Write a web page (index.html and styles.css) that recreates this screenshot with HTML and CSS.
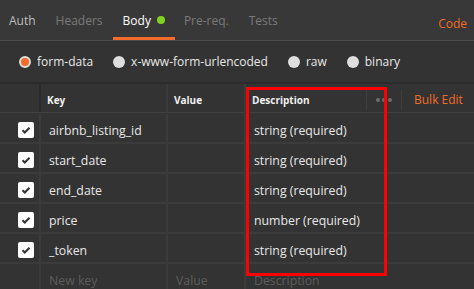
FILE: index.html
```html
<!DOCTYPE html>
<html lang="en">
  <head>
    <title>Body - form-data</title>
    <meta charset="utf-8" />
    <link rel="stylesheet" href="styles.css">
  </head>
  <body>
    <div class="tabs">
      <span class="tab">Auth</span>
      <span class="tab off">Headers</span>
      <span class="tab active">Body <i class="dot"></i></span>
      <span class="tab off prereq">Pre-req.</span>
      <span class="tab off">Tests</span>
      <span class="code">Code</span>
    </div>

    <div class="modes">
      <label class="mode"><span class="radio checked"></span>form-data</label>
      <label class="mode"><span class="radio"></span>x-www-form-urlencoded</label>
      <label class="mode"><span class="radio"></span>raw</label>
      <label class="mode"><span class="radio"></span>binary</label>
    </div>

    <div class="params">
      <div class="row head">
        <div class="cell check"></div>
        <div class="cell key">Key</div>
        <div class="cell value">Value</div>
        <div class="cell desc">Description</div>
        <div class="cell more">
          <span class="sep"></span>
          <svg width="16" height="4" viewBox="0 0 16 4"><circle cx="2" cy="2" r="2" fill="#6e6e6e"/><circle cx="8" cy="2" r="2" fill="#6e6e6e"/><circle cx="14" cy="2" r="2" fill="#6e6e6e"/></svg>
          <span class="sep"></span>
        </div>
        <div class="cell bulk">Bulk Edit</div>
      </div>
      <div class="row">
        <div class="cell check"><span class="box"><svg viewBox="0 0 16 16" width="16" height="16"><path d="M4.5 8.2l2.3 2.3 4.7-4.7" fill="none" stroke="#333" stroke-width="2"/></svg></span></div>
        <div class="cell key">airbnb_listing_id</div>
        <div class="cell value"></div>
        <div class="cell desc wide">string (required)</div>
      </div>
      <div class="row">
        <div class="cell check"><span class="box"><svg viewBox="0 0 16 16" width="16" height="16"><path d="M4.5 8.2l2.3 2.3 4.7-4.7" fill="none" stroke="#333" stroke-width="2"/></svg></span></div>
        <div class="cell key">start_date</div>
        <div class="cell value"></div>
        <div class="cell desc wide">string (required)</div>
      </div>
      <div class="row">
        <div class="cell check"><span class="box"><svg viewBox="0 0 16 16" width="16" height="16"><path d="M4.5 8.2l2.3 2.3 4.7-4.7" fill="none" stroke="#333" stroke-width="2"/></svg></span></div>
        <div class="cell key">end_date</div>
        <div class="cell value"></div>
        <div class="cell desc wide">string (required)</div>
      </div>
      <div class="row">
        <div class="cell check"><span class="box"><svg viewBox="0 0 16 16" width="16" height="16"><path d="M4.5 8.2l2.3 2.3 4.7-4.7" fill="none" stroke="#333" stroke-width="2"/></svg></span></div>
        <div class="cell key">price</div>
        <div class="cell value"></div>
        <div class="cell desc wide">number (required)</div>
      </div>
      <div class="row">
        <div class="cell check"><span class="box"><svg viewBox="0 0 16 16" width="16" height="16"><path d="M4.5 8.2l2.3 2.3 4.7-4.7" fill="none" stroke="#333" stroke-width="2"/></svg></span></div>
        <div class="cell key">_token</div>
        <div class="cell value"></div>
        <div class="cell desc wide">string (required)</div>
      </div>
      <div class="row empty">
        <div class="cell check"></div>
        <div class="cell key">New key</div>
        <div class="cell value">Value</div>
        <div class="cell desc wide">Description</div>
      </div>

      <div class="highlight"></div>
    </div>
  </body>
</html>
```

FILE: styles.css
```css
 body {
   margin: 0;
   background: #333333;
   font-family: "Open Sans", "Liberation Sans", sans-serif;
   font-size: 12px;
   color: #e8e8e8;
   overflow: hidden;
 }

 .tabs {
   display: flex;
   align-items: center;
   height: 41px;
   background: #383838;
   border-bottom: 1px solid #4a4a4a;
   padding: 0 7px 0 9px;
   box-sizing: border-box;
   font-size: 12px;
 }

 .tab {
   position: relative;
   display: flex;
   align-items: center;
   height: 100%;
   color: #bcbcbc;
   margin-right: 20px;
 }

 .tab.off {
   color: #7a7a7a;
 }

 .tab.active {
   color: #ffffff;
   padding: 0 10px;
   margin-left: -10px;
   margin-right: 9px;
 }

 .tab.prereq {
   margin-right: 20px;
 }

 .tab.active::after {
   content: "";
   position: absolute;
   left: 0;
   right: 0;
   bottom: 0;
   height: 3px;
   background: #f26b2a;
 }

 .dot {
   display: inline-block;
   width: 8px;
   height: 8px;
   border-radius: 50%;
   background: #7ed321;
   margin-left: 6px;
 }

 .code {
   margin-left: auto;
   color: #f26b2a;
   padding-top: 6px;
 }

 .modes {
   display: flex;
   align-items: center;
   height: 41px;
   padding-left: 19px;
   box-sizing: border-box;
 }

 .mode {
   display: flex;
   align-items: center;
   color: #e8e8e8;
   margin-right: 20px;
 }

 .radio {
   display: inline-block;
   width: 12px;
   height: 12px;
   border-radius: 50%;
   background: #dedede;
   margin-right: 6px;
   box-sizing: border-box;
 }

 .radio.checked {
   background: #f26b2a;
   border: 2px solid #dedede;
 }

 .params {
   position: relative;
   border-top: 2px solid #2b2b2b;
 }

 .row {
   display: flex;
   height: 30px;
   box-sizing: border-box;
   border-top: 2px solid #3b3b3b;
   font-size: 12.3px;
 }

 .row .cell {
   padding-top: 4px;
 }

 .row.head {
   border-top: none;
   height: 29px;
   font-weight: bold;
   font-size: 10px;
   color: #f0f0f0;
   border-bottom: 1px solid #404040;
 }

 .row.head .cell {
   padding-top: 3px;
 }

 .row.head + .row {
   border-top: none;
   height: 29px;
   padding-top: 1px;
 }

 .cell {
   display: flex;
   align-items: center;
   box-sizing: border-box;
   padding-left: 8px;
 }

 .row.head .cell {
   padding-left: 6px;
 }

 .check {
   width: 41px;
   justify-content: flex-end;
   padding-right: 5px;
   border-right: 2px solid #3b3b3b;
 }

 .row .check {
   padding-left: 0;
 }

 .row.head .check {
   padding: 0;
   border-right-color: #2a2a2a;
 }

 .key {
   width: 127px;
   border-right: 2px solid #3b3b3b;
 }

 .value {
   width: 78px;
   border-right: 2px solid #3b3b3b;
 }

 .desc {
   width: 120px;
 }

 .desc.wide {
   flex: 1;
 }

 .row.head .more {
   width: 36px;
   padding: 3px 0 0 0;
   justify-content: space-between;
 }

 .sep {
   width: 1px;
   height: 20px;
   background: #3f3f3f;
 }

 .row.head .bulk {
   padding-left: 12px;
   color: #f26b2a;
   font-weight: normal;
   font-size: 12px;
 }

 .box {
   display: block;
   width: 16px;
   height: 16px;
   border-radius: 2px;
   background: #ffffff;
 }

 .box svg {
   display: block;
 }

 .row.empty {
   color: #5c5c5c;
 }

 .highlight {
   position: absolute;
   left: 246px;
   top: 3px;
   width: 141px;
   height: 189px;
   border: 3px solid #ff0000;
   box-sizing: border-box;
 }
```
